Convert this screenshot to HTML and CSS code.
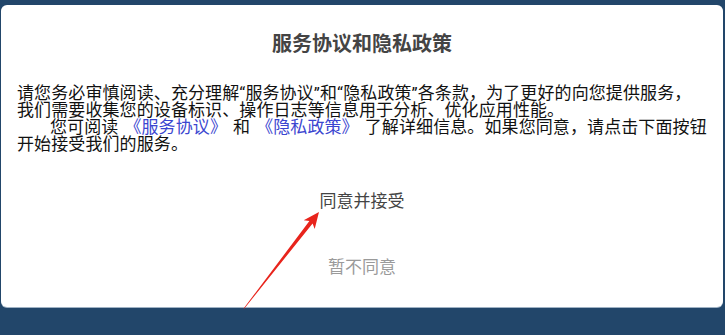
FILE: index.html
```html
<!DOCTYPE html>
<html lang="zh-CN">
<head>
    <meta charset="UTF-8">
    <meta name="viewport" content="width=device-width, initial-scale=1.0">
    <title>服务协议和隐私政策</title>
    <link rel="stylesheet" href="styles.css">
</head>
<body>
    <div id="dialog">
        <h1>服务协议和隐私政策</h1>
        <div id="content">
            <p>请您务必审慎阅读、充分理解“服务协议”和“隐私政策”各条款，为了更好的向您提供服务，<br>我们需要收集您的设备标识、操作日志等信息用于分析、优化应用性能。<br><span class="indent"></span>您可阅读<a href="#">《服务协议》</a>和<a href="#">《隐私政策》</a>了解详细信息。如果您同意，请点击下面按钮<br>开始接受我们的服务。</p>
        </div>
        <div id="actions">
            <button class="agree">同意并接受</button>
            <button class="refuse">暂不同意</button>
        </div>
    </div>

    <svg class="arrow" width="725" height="335" viewBox="0 0 725 335">
        <polygon points="243.6,308.5 309.4,221.0 303.7,220.3 319,212 314.7,228.9 312.6,223.4 244.4,308.5" fill="#e8241c"/>
    </svg>
</body>
</html>
```

FILE: styles.css
```css
body {
    font-family: Roboto, "Noto Sans CJK SC", sans-serif;
    margin: 0;
    padding: 0;
    background-color: #22466a;
    height: 335px;
    overflow: hidden;
}

#dialog {
    margin: 5px 2px 0 1px;
    height: 302px;
    box-sizing: border-box;
    background-color: #fff;
    border-radius: 6px;
    box-shadow: 0 1px 0 #9fb2c4;
    padding: 0 16px;
}

h1 {
    margin: 0;
    padding-top: 23px;
    text-align: center;
    font-size: 20px;
    line-height: 32px;
    font-weight: bold;
    color: #444;
}

#content {
    margin-top: 25px;
}

#content p {
    margin: 0;
    font-size: 17px;
    line-height: 17px;
    color: #111;
    white-space: nowrap;
    letter-spacing: 0.1px;
}

#content .indent {
    display: inline-block;
    width: 33px;
}

#content a {
    color: #3b46d0;
    text-decoration: none;
    margin: 0 6px;
}

#actions {
    display: flex;
    flex-direction: column;
    align-items: center;
    margin-top: 28px;
    gap: 26px;
}

button {
    border: none;
    background: none;
    font-family: Roboto, "Noto Sans CJK SC", sans-serif;
    font-size: 17px;
    line-height: 40px;
    padding: 0 10px;
    cursor: pointer;
}

button.agree {
    color: #444;
}

button.refuse {
    color: #9a9a9a;
}

.arrow {
    position: absolute;
    left: 0;
    top: 0;
    pointer-events: none;
}
```
